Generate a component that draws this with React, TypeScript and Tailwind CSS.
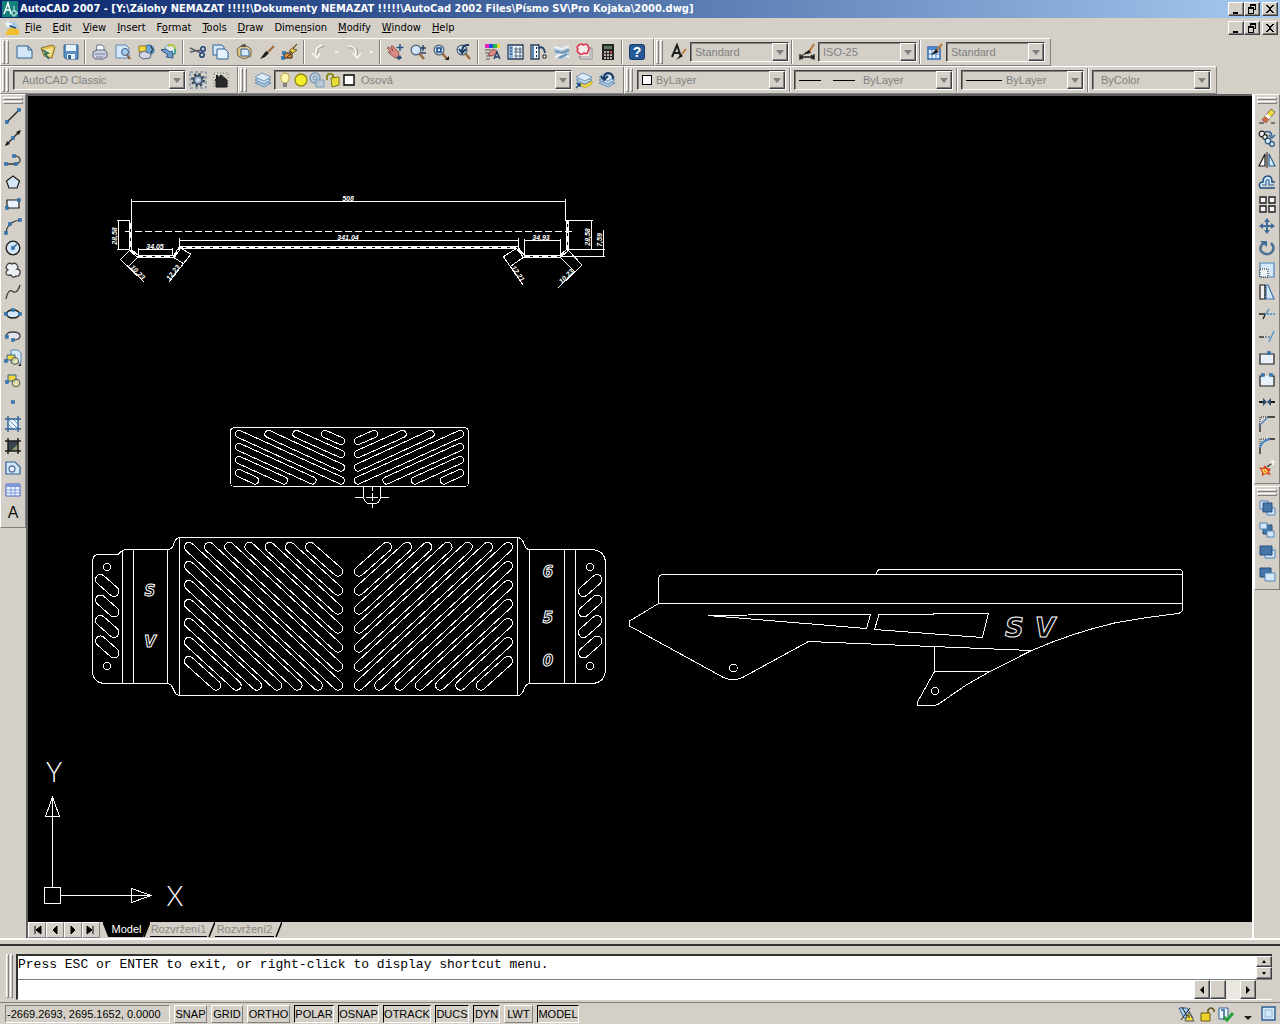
import type { ReactNode } from "react";
import clsx from "clsx";

const RAISED = "border border-t-white border-l-white border-r-[#808080] border-b-[#808080]";
const SUNKEN = "border border-t-[#808080] border-l-[#808080] border-r-white border-b-white";
const BEVEL =
  "border border-t-white border-l-white border-r-[#404040] border-b-[#404040] shadow-[inset_-1px_-1px_0_#808080] bg-[#d4d0c8]";

const B = "#2f6296";
const L = "#d3e7f8";
const K = "#1c1c1c";
const Y = "#f0d83c";

const magnifier = (
  <>
    <path d="M10 10 L15 16" stroke="#9a6a3c" strokeWidth="2.4" />
    <circle cx="7" cy="7" r="4.8" fill={L} stroke="#5a6a7c" strokeWidth="1.4" />
  </>
);
const brush = (
  <>
    <path d="M10 9 L16 3" stroke="#a86a38" strokeWidth="2.2" />
    <path d="M2 16 L8 8 L11 10 L7 14 Z" fill={K} />
  </>
);
const layers = (
  <g stroke="#5b83ad" strokeWidth=".8">
    <path d="M1 12 L8 9 L17 12 L10 16 Z" fill="#a9c6e2" />
    <path d="M1 9 L8 6 L17 9 L10 13 Z" fill="#c4daee" />
    <path d="M1 6 L8 2 L17 6 L10 10 Z" fill="#dcebf8" />
  </g>
);
const node = (x: number, y: number) => <rect x={x - 1.5} y={y - 1.5} width="3" height="3" fill="#2a7ab8" stroke={B} strokeWidth=".5" />;

const icons: Record<string, ReactNode> = {
  qnew: <path d="M1 3 H12 L16 7 V15 H1 Z M12 3 V7 H16" fill={L} stroke={B} />,
  open: (
    <>
      <path d="M2 5 L13 2 L16 4 L13 15 L5 13 Z" fill="#e3c65a" stroke="#8b742c" />
      <path d="M5 7 L14 5 L11 14 Z" fill="#f6e79c" />
      <path d="M3 7 L9 10 L6 11 L10 16" stroke="#2d6c68" strokeWidth="1.8" />
    </>
  ),
  save: (
    <>
      <path d="M2 2 H16 V16 H4 L2 14 Z" fill="#5b8fc4" stroke={B} />
      <path d="M4 2 H14 V8 H4 Z M5 11 H13 V16 H5 Z" fill="#e8f2fb" />
      <path d="M6 12 H9 V16 H6 Z" fill={B} />
    </>
  ),
  plot: (
    <>
      <path d="M5 9 L6 2 H11 L13 4 V9 Z" fill="#fff" stroke="#6b7290" />
      <path d="M2 9 L6 7 H14 L16 10 V14 L12 16 H4 L2 14 Z" fill="#c9cede" stroke="#5e6484" />
      <path d="M4 11 H14 M5 14 H12" stroke="#7b82a0" />
    </>
  ),
  preview: (
    <>
      <path d="M2 2 H12 L15 5 V15 H2 Z" fill={L} stroke="#5a86b2" />
      <circle cx="11" cy="9" r="3.5" fill="#a6cbea" stroke="#3e5f80" />
      <path d="M13 12 L16 16" stroke="#8b5a34" strokeWidth="2" />
    </>
  ),
  publish: (
    <>
      <circle cx="12" cy="7" r="5" fill="#6aa8d8" stroke={B} />
      <path d="M2 3 H9 V9 H2 Z" fill={Y} stroke="#8a7a20" />
      <path d="M3 10 L7 8 L14 11 L13 15 L6 16 L2 13 Z" fill="#d5d8e6" stroke="#5e6484" />
      <path d="M14 3 Q17 7 14 10" stroke={K} />
    </>
  ),
  dwf: (
    <>
      <circle cx="10" cy="7" r="5.500" fill="#dfe8ee" stroke="#58a3a0" />
      <path d="M8 3 Q14 0 15 6" stroke="#b7c83c" strokeWidth="2" />
      <path d="M15 6 Q16 11 12 12" stroke="#3aa08c" strokeWidth="2" />
      <path d="M1 7 L6 6 L10 9 L12 8 L13 15 L6 14 L8 12 Z" fill="#6f9ed0" stroke="#34587f" />
    </>
  ),
  cut: (
    <>
      <path d="M1 5 L12 10 M1 9 L12 7" stroke="#56606c" strokeWidth="1.4" />
      <circle cx="14" cy="6" r="2.2" stroke="#1e3f78" strokeWidth="1.5" />
      <circle cx="13" cy="12" r="2.2" stroke="#1e3f78" strokeWidth="1.5" />
    </>
  ),
  copy: (
    <>
      <path d="M1 2 H10 L12 4 V12 H1 Z" fill={L} stroke={B} />
      <path d="M5 6 H13 L16 9 V16 H5 Z" fill="#e6f2fc" stroke={B} />
    </>
  ),
  paste: (
    <>
      <path d="M2 6 L9 1 L16 6 V13 L9 16 L3 13 Z" fill="#dfc88a" stroke="#7c6538" />
      <path d="M6 6 H12 L14 8 V13 H6 Z" fill={L} stroke={B} />
      <path d="M6 3 L11 3" stroke="#555" strokeWidth="2" />
    </>
  ),
  match: brush,
  blockEdit: (
    <>
      <path d="M3 10 H11 V15 H3 Z" fill="#e88e38" stroke={K} />
      <path d="M16 1 L8 8 L11 9 L6 14 L16 7 L12 6 Z" fill={Y} stroke="#4d3510" strokeWidth=".8" />
      {node(3, 10)}
      {node(2, 15)}
    </>
  ),
  undo: (
    <>
      <path d="M14 3 Q6 3 7 12" stroke="#aaa69e" strokeWidth="2.5" />
      <path d="M13 2 Q5 3 6 12 M2 10 L7 15 L10 10" stroke="#f7f6f2" strokeWidth="1.6" />
    </>
  ),
  redo: (
    <>
      <path d="M4 4 Q13 4 12 12" stroke="#aaa69e" strokeWidth="2.5" />
      <path d="M3 3 Q12 3 11 12 M8 10 L12 15 L16 10" stroke="#f7f6f2" strokeWidth="1.6" />
    </>
  ),
  pan: (
    <>
      <path d="M1 5 L3 4 L7 8 L5 3 L7 3 L11 8 L13 9 L12 14 L9 15 L2 9 L5 9 Z" fill="#d98d84" stroke="#9a5752" />
      <path d="M10 15 L14 12 L16 15 L13 17 Z" fill="#2d5079" />
      <path d="M14 1 V8 M10.500 4.5 H17.500" stroke="#244f82" strokeWidth="1.4" />
    </>
  ),
  zoomRt: (
    <>
      {magnifier}
      <path d="M14 2 V8 M11.500 5 H17 M12 10 H17" stroke="#22406a" strokeWidth="1.4" />
    </>
  ),
  zoomWin: (
    <>
      {magnifier}
      <path d="M5 5 H9 V9 H5 Z" stroke="#124a8a" strokeWidth="1.6" />
      <path d="M17 13 V17 H13 Z" fill={K} />
    </>
  ),
  zoomPrev: (
    <>
      {magnifier}
      <path d="M14 2 Q7 1 7 9 M4 6 L7 10 L11 6" stroke="#1b3a5e" strokeWidth="2" />
    </>
  ),
  properties: (
    <>
      <path d="M1 1 H5 V5 H1 Z" fill="#e224c4" />
      <path d="M5 1 H9 V5 H5 Z" fill="#2749e0" />
      <path d="M9 1 H13 V5 H9 Z" fill="#22b84e" />
      <path d="M13 1 H16 V5 H13 Z" fill="#ecd22b" />
      <path d="M1 7 H7 M1 10 H6 M2 13 H7 M2 16 H6" stroke="#555" />
      <path d="M4 12 L9 6 L13 8 L9 13 Z" fill="#d98d84" stroke="#994f4a" />
      <path d="M10 16 L13 9 L16 16 M11 14 H15" stroke="#223a66" strokeWidth="1.4" />
    </>
  ),
  designCenter: (
    <>
      <path d="M1 2 H16 V16 H1 Z" fill="#eef5fb" stroke="#243a58" strokeWidth="1.300" />
      <path d="M2 3 H6 V15 H2 Z" fill="#86b2dc" />
      <path d="M3 5 H5 M3 8 H5 M3 11 H5" stroke="#243a58" />
      <path d="M8 5 H10 V7 H8 Z M12 5 H14 V7 H12 Z M8 8 H10 V10 H8 Z M12 8 H14 V10 H12 Z M8 12 H10 V14 H8 Z M12 12 H14 V14 H12 Z" stroke="#3a4c60" strokeWidth=".8" />
    </>
  ),
  toolPalettes: (
    <>
      <path d="M1 2 H9 V16 H1 Z" fill="#eef5fb" stroke="#243a58" strokeWidth="1.300" />
      <path d="M2 3 H4 V15 H2 Z" fill="#4e86bd" />
      <path d="M6 5 H7 M6 9 H7 M6 13 H7" stroke={K} strokeWidth="2" />
      <path d="M8 5 Q14 2 15 10" stroke="#24456c" strokeWidth="2" />
      <path d="M13 12 H16 V15 H13 Z" fill="#fff" stroke={K} />
    </>
  ),
  sheetSet: (
    <>
      <path d="M1 3 L8 5 L16 2 V15 L8 16 L1 9 Z" fill="#b3cbdd" />
      <path d="M1 4 L9 6 L16 3 M2 14 L8 11 L16 14" stroke="#eef5fa" strokeWidth="2" />
      <path d="M2 8 L9 10 L16 7 M6 15 L14 11" stroke="#6c93b4" strokeWidth="2" />
    </>
  ),
  markup: (
    <>
      <path d="M6 5 H16 V16 H4 V13" fill="#eee" stroke="#888" />
      <path d="M14 4 V14 H2" stroke="#999" />
      <path d="M3 2 Q6 0 7 2 Q11 0 12 3 Q14 6 12 8 Q12 12 8 10 Q5 13 3 10 Q0 8 2 6 Q0 4 3 2" fill="#f7ecee" stroke="#e0344f" strokeWidth="1.6" />
    </>
  ),
  calc: (
    <>
      <path d="M3 1 H15 V17 H3 Z" fill="#292424" />
      <path d="M5 3 H13 V6 H5 Z" fill="#5c7858" />
      <path d="M5 9 H13 M5 12 H13 M5 15 H13" stroke="#f0e4e2" strokeWidth="1.6" strokeDasharray="2 1" />
      <path d="M11 9 H13" stroke="#d33" strokeWidth="1.6" />
    </>
  ),
  help: (
    <>
      <rect x="1.500" y="1.500" width="15" height="15" rx="2" fill="#265a96" stroke="#173c68" />
      <text x="9" y="14" textAnchor="middle" fill="#fff" stroke="none" className="font-['Liberation_Sans'] text-[14px] font-bold">?</text>
    </>
  ),
  textStyle: (
    <>
      <path d="M2 14 L7 2 L11 14 M4 10 H10" stroke={K} strokeWidth="2" />
      <path d="M12 11 L16 6" stroke="#b87838" strokeWidth="2" />
      <path d="M6 17 L11 11 L13 13 Z" fill={K} />
    </>
  ),
  dimStyle: (
    <>
      <path d="M11 9 L16 1" stroke="#b87838" strokeWidth="2" />
      <path d="M4 12 L11 7 L13 10 Z" fill={K} />
      <path d="M2 11 V17 M16 11 V17 M2 14 H16 M5 12 L2 14 L5 16 M13 12 L16 14 L13 16" stroke={K} strokeWidth="1.300" />
    </>
  ),
  tableStyle: (
    <>
      <path d="M2 4 H14 V16 H2 Z" fill="#eaf3fc" stroke="#2c64b0" strokeWidth="1.5" />
      <path d="M2 4 H14 V7 H2 Z" fill="#4c86cc" />
      <path d="M2 11 H14 M6 7 V16 M10 7 V16" stroke="#4c86cc" />
      <path d="M11 7 L16 1" stroke="#b87838" strokeWidth="2" />
      <path d="M5 12 L10 6 L13 9 Z" fill={K} />
    </>
  ),
  gear: (
    <>
      <path d="M1 1 H17 V17 H1 Z" stroke="#56789d" strokeDasharray="3 2" />
      <circle cx="9" cy="9" r="5.800" stroke="#3f5368" strokeWidth="2.500" strokeDasharray="2.500 2" />
      <circle cx="9" cy="9" r="4.200" fill="#9db4cc" stroke="#33485e" strokeWidth="1.500" />
      <circle cx="9" cy="9" r="1.500" fill="#eee" />
    </>
  ),
  home: (
    <>
      <path d="M2 2 H16 V16 H2 Z" stroke="#777" strokeDasharray="1 2" />
      <path d="M3 9 L9 4 L15 9 V16 H4 V9 Z" fill="#292929" stroke={K} />
      <path d="M4 4 H6 V8 H4 Z" fill={K} />
    </>
  ),
  layers,
  layerCurrent: (
    <>
      {layers}
      <path d="M5 12 L10 14 L17 10 V13 L10 17 L5 14 Z" fill={Y} stroke="#a8921e" strokeWidth=".6" />
      <path d="M1 17 L5 13 M2 13 H5 V16" stroke="#174776" strokeWidth="1.300" />
    </>
  ),
  layerPrev: (
    <>
      {layers}
      <path d="M15 8 Q15 2 10 2 Q6 3 6 7 M3 5 L6 9 L10 5" stroke="#183a60" strokeWidth="2" />
    </>
  ),
  bulb: (
    <>
      <path d="M7 12 Q4 8 5 5 Q6 2 9 2 Q12 2 13 5 Q14 8 11 12 Z" fill="#fdf6ac" stroke="#b4a046" />
      <path d="M7 13 H11 M7 15 H11" stroke="#667" strokeWidth="1.600" />
    </>
  ),
  sun: <circle cx="9" cy="9" r="6" fill="#f4ee2a" stroke="#8b8a18" strokeWidth="1.300" />,
  vpFreeze: (
    <>
      <circle cx="7" cy="7" r="5" fill="#bcd0de" stroke="#7b9cb4" strokeWidth="1.500" />
      <circle cx="7" cy="7" r="2" stroke="#7b9cb4" />
      <path d="M8 9 H16 V16 H8 Z" fill="#b9c9d6" stroke="#7b9cb4" />
    </>
  ),
  lock: (
    <>
      <path d="M3 9 V5 Q5 1 9 4 V8" stroke="#8e8a1c" strokeWidth="2" />
      <path d="M7 7 L15 6 V14 L8 16 Z" fill="#e6dd3a" stroke="#7d7a14" />
    </>
  ),
  swatch: <path d="M4 4 H14 V14 H4 Z" fill="#fff" stroke="#000" strokeWidth="1.400" />,

  line: (
    <>
      <path d="M3 15 L15 3" stroke={K} strokeWidth="1.300" />
      {node(3, 15)}
      {node(15, 3)}
    </>
  ),
  xline: (
    <>
      <path d="M2 16 L16 2" stroke={K} strokeWidth="1.300" />
      <path d="M1 17 L3 12 L6 15 Z M17 1 L12 3 L15 6 Z" fill={K} />
      {node(9, 9)}
    </>
  ),
  pline: (
    <>
      <path d="M2 13 H12" stroke={K} strokeWidth="1.300" />
      <path d="M10 5 Q16 5 16 9 Q16 12 12 13" stroke="#555" strokeWidth="1.500" />
      {node(2, 13)}
      {node(12, 13)}
      {node(10, 5)}
    </>
  ),
  polygon: <path d="M9 3 L15.500 8 L13 15 H5 L2.500 8 Z" fill={L} stroke={K} strokeWidth="1.200" />,
  rect: (
    <>
      <path d="M3 5 H15 V13 H3 Z" fill="#eaf3fb" stroke={K} strokeWidth="1.200" />
      {node(3, 13)}
      {node(15, 5)}
    </>
  ),
  arc: (
    <>
      <path d="M2 16 Q3 5 16 3" stroke="#333" strokeWidth="1.200" />
      {node(2, 16)}
      {node(6, 7)}
      {node(16, 3)}
    </>
  ),
  circle: (
    <>
      <circle cx="9" cy="9" r="6.800" fill={L} stroke={K} strokeWidth="1.300" />
      <path d="M9 9 L13 5" stroke={B} strokeWidth="1.300" />
      {node(9, 9)}
    </>
  ),
  revcloud: (
    <path
      d="M4 9 Q1 7 3 4 Q5 1 8 3 Q11 1 13 4 Q15 7 13 8 Q17 9 16 12 Q15 16 12 15 Q9 18 7 14 Q2 15 2 12 Q2 10 4 9 Z"
      fill="#eef2f6"
      stroke="#444"
      strokeWidth="1.300"
    />
  ),
  spline: <path d="M2 16 Q4 6 8 8 Q13 12 16 2" stroke="#333" strokeWidth="1.200" />,
  ellipse: (
    <>
      <ellipse cx="9" cy="9" rx="6.500" ry="4" fill={L} stroke={K} strokeWidth="1.300" />
      {node(2, 9)}
      {node(16, 9)}
      {node(9, 5)}
    </>
  ),
  ellipseArc: (
    <>
      <path d="M2 10 Q2 5 9 5 Q16 5 16 9 Q16 13 9 13" fill="#e0e6ec" stroke="#444" strokeWidth="1.300" />
      {node(3, 10)}
      {node(9, 13)}
    </>
  ),
  insertBlock: (
    <>
      <path d="M7 1 H14 L17 4 V14 H7 Z" fill={L} stroke="#5a86b2" />
      <path d="M3 6 H11 V11 H3 Z" fill={Y} stroke={B} />
      <circle cx="11" cy="12" r="3.500" fill="#e9e69a" stroke="#555" fillOpacity=".7" />
      <path d="M17 14 V17 H14 Z" fill={K} />
      {node(2, 12)}
    </>
  ),
  makeBlock: (
    <>
      <path d="M4 4 H12 V10 H4 Z" fill={Y} stroke={B} />
      <circle cx="12" cy="12" r="3.800" fill="#e9e69a" stroke="#555" fillOpacity=".6" />
      {node(3, 11)}
    </>
  ),
  point: node(9, 9),
  hatch: (
    <>
      <path d="M4 4 H14 V14 H4 Z" fill="#edf5fc" />
      <path d="M5 5 L14 14 M9 4 L14 9 M4 9 L9 14 M12 4 L14 6 M4 12 L6 14" stroke="#3b77b4" strokeWidth=".8" />
      <path d="M1 4 H17 M1 14 H17 M4 1 V17 M14 1 V17" stroke={B} strokeWidth="1.400" />
    </>
  ),
  gradient: (
    <>
      <path d="M4 4 H14 V14 H4 Z" fill="#3c4650" />
      <path d="M14 7 V14 H7 Z" fill="#9a9a72" />
      <path d="M1 4 H17 M1 14 H17 M4 1 V17 M14 1 V17" stroke={K} strokeWidth="1.500" />
    </>
  ),
  region: (
    <>
      <path d="M2 3 H11 L16 8 V15 H2 Z" fill={L} stroke={B} strokeWidth="1.200" />
      <circle cx="8" cy="10" r="3" fill="#eef" stroke="#56789d" strokeWidth="1.300" />
    </>
  ),
  table: (
    <>
      <path d="M2 3 H16 V15 H2 Z" fill="#f2f7ff" stroke="#4467c0" />
      <path d="M2 3 H16 V6 H2 Z" fill="#7d97da" />
      <path d="M2 9 H16 M2 12 H16 M7 6 V15 M11 6 V15" stroke="#7d97da" />
    </>
  ),
  mtext: <text x="9" y="15" textAnchor="middle" fill="#111" stroke="none" className="font-['Liberation_Sans'] text-[16px]">A</text>,

  erase: (
    <>
      <path d="M1 16 H6 M13 16 H17" stroke={K} strokeWidth="1.200" />
      <path d="M4 13 L13 2 L17 5 L8 16 Z" fill={Y} stroke="#555" strokeWidth=".8" />
      <path d="M4 13 L7 9 L11 12 L8 16 Z" fill="#cf6a50" />
      <path d="M7 9 L9 7 L13 10 L11 12 Z" fill="#fff" />
    </>
  ),
  copyObj: (
    <>
      <circle cx="4" cy="5" r="2.800" fill="#eee" stroke={K} strokeWidth="1.200" />
      <circle cx="7" cy="8" r="2.300" fill="#eee" stroke={K} strokeWidth="1.200" />
      <circle cx="10" cy="12" r="2.800" fill={L} stroke="#264f7c" strokeWidth="1.200" />
      <circle cx="14" cy="15" r="2.300" fill={L} stroke="#264f7c" strokeWidth="1.200" />
      <path d="M7 3 Q13 1 14 7 M11 6 L14 9 L17 6" stroke={B} strokeWidth="1.500" />
    </>
  ),
  mirror: (
    <>
      <path d="M7 3 V15 H1 Z" fill="#fff" stroke={K} strokeWidth="1.200" />
      <path d="M11 3 V15 H17 Z" fill={L} stroke={B} strokeWidth="1.200" />
      <path d="M9 1 V17" stroke={K} />
    </>
  ),
  offset: (
    <>
      <path d="M2 15 Q0 9 5 9 Q5 3 10 3 Q14 3 14 9 H17 M2 15 H17" fill={L} stroke="#1f4f80" strokeWidth="1.500" />
      <path d="M4 12 H8 V8 Q10 5 11 8 V12 H16" stroke={B} strokeWidth="1.200" />
    </>
  ),
  array: <path d="M2 2 H8 V8 H2 Z M11 2 H17 V8 H11 Z M2 11 H8 V17 H2 Z M11 11 H17 V17 H11 Z" fill="#f4f4f4" stroke={K} strokeWidth="1.300" />,
  move: (
    <>
      <path d="M9 3 V15 M3 9 H15" stroke="#3e6b9a" strokeWidth="2" />
      <path d="M9 1 L12 5 H6 Z M9 17 L12 13 H6 Z M1 9 L5 6 V12 Z M17 9 L13 6 V12 Z" fill="#3e6b9a" />
    </>
  ),
  rotate: (
    <>
      <path d="M6 4 Q1 7 3 12 Q7 17 13 14 Q18 9 13 4" stroke="#4d7095" strokeWidth="2.500" />
      <path d="M2 2 H9 V8 Z" fill="#3e6b9a" />
    </>
  ),
  scale: (
    <>
      <path d="M2 2 H16 V16 H2 Z" fill={L} stroke="#4f84b8" strokeWidth="1.200" />
      <path d="M2 8 H10 V16 H2 Z" fill="#eef5fb" stroke={K} strokeDasharray="1 1" />
    </>
  ),
  stretch: (
    <>
      <path d="M2 2 H7 V16 H2 Z" fill="#eee" stroke={K} strokeWidth="1.200" />
      <path d="M8 2 H10 L16 16 H8 Z" fill={L} stroke="#3c76ae" strokeWidth="1.200" />
      <path d="M7 2 V16" stroke={K} strokeDasharray="1 1" />
    </>
  ),
  trim: (
    <>
      <path d="M1 9 H7 M5 14 L7 10" stroke={K} strokeWidth="1.300" />
      <path d="M7 10 L11 4" stroke="#3c86c6" strokeWidth="1.300" />
      <path d="M9 9 H17" stroke="#3c86c6" strokeWidth="1.300" strokeDasharray="2 1" />
    </>
  ),
  extend: (
    <>
      <path d="M1 10 H6" stroke={K} strokeWidth="1.300" />
      <path d="M7 10 H12" stroke={B} strokeDasharray="2 1" />
      <path d="M11 15 L16 4" stroke="#4f94d0" strokeWidth="1.300" />
    </>
  ),
  breakPoint: (
    <>
      <path d="M2 5 H16 V15 H2 Z" fill="#e8f1f9" stroke={K} strokeWidth="1.200" />
      {node(11, 4)}
    </>
  ),
  breakObj: (
    <>
      <path d="M4 5 H2 V15 H16 V5 H14" fill="#e8f1f9" stroke={K} strokeWidth="1.200" />
      {node(5, 4)}
      {node(13, 4)}
    </>
  ),
  join: (
    <>
      <path d="M1 9 H6 M12 9 H17" stroke={K} strokeWidth="1.800" />
      <path d="M5 5 L9 9 L5 13 Z M13 5 L9 9 L13 13 Z" fill="#2e4d6c" />
    </>
  ),
  chamfer: (
    <>
      <path d="M2 17 V9 M9 2 H17" stroke={K} strokeWidth="1.300" />
      <path d="M2 9 V2 H9" stroke={K} strokeDasharray="1 1" />
      <path d="M2 10 L10 2" stroke="#5389bf" strokeWidth="1.500" />
    </>
  ),
  fillet: (
    <>
      <path d="M2 17 V10 M10 2 H17" stroke={K} strokeWidth="1.300" />
      <path d="M2 9 V2 H9" stroke={K} strokeDasharray="1 1" />
      <path d="M2 11 Q3 4 12 2" stroke="#3f83c2" strokeWidth="1.800" />
    </>
  ),
  explode: (
    <>
      <path d="M1 8 L5 9 L7 6 L9 9 L13 10 L11 13 L13 16 L8 15 L4 17 L4 13 Z" fill="#d8452c" />
      <path d="M4 10 L8 10 L10 13 L6 15 Z" fill="#ffe24d" />
      <path d="M6 11 L8 12 L7 14 Z" fill="#d8452c" />
      <path d="M9 8 L14 4" stroke="#444" strokeWidth="1.500" />
      <path d="M12 4 L17 3 M14 1 L15 6" stroke="#f7f7f0" strokeWidth="1.500" />
    </>
  ),
  bringFront: (
    <>
      <path d="M2 2 H10 V10 H2 Z M9 9 H17 V16 H9 Z" fill={L} stroke="#4f84b8" />
      <path d="M5 4 H14 V13 H5 Z" fill="#4676aa" stroke="#264f7c" />
    </>
  ),
  sendBack: (
    <>
      <path d="M5 4 H14 V13 H5 Z" fill="#4676aa" stroke="#264f7c" />
      <path d="M2 2 H9 V8 H2 Z M9 10 H16 V16 H9 Z" fill={L} stroke="#4f84b8" />
    </>
  ),
  bringAbove: (
    <>
      <path d="M7 7 H17 V15 H7 Z" fill={L} stroke="#4f84b8" />
      <path d="M2 3 H14 V12 H2 Z" fill="#4676aa" stroke="#264f7c" />
    </>
  ),
  sendUnder: (
    <>
      <path d="M2 3 H13 V12 H2 Z" fill="#4676aa" stroke="#264f7c" />
      <path d="M7 8 H17 V16 H7 Z" fill={L} stroke="#4f84b8" />
    </>
  ),
};

function Icon({ name }: { name: string }) {
  return (
    <svg viewBox="0 0 18 18" className="h-[18px] w-[18px] shrink-0" fill="none" aria-hidden="true">
      {icons[name]}
    </svg>
  );
}

function ToolButton({ name, vertical }: { name: string; vertical?: boolean }) {
  return (
    <button type="button" aria-label={name} className={clsx("flex shrink-0 items-center justify-center", vertical ? "h-[22px] w-6" : "h-6 w-[23px]")}>
      <Icon name={name} />
    </button>
  );
}

function Grip() {
  return (
    <div className="mr-1 ml-px flex h-6 shrink-0 gap-px">
      <span className={clsx("w-[3px]", RAISED)} />
      <span className={clsx("w-[3px]", RAISED)} />
    </div>
  );
}

function Sep({ wide }: { wide?: boolean }) {
  return <span className={clsx("h-6 w-[2px] shrink-0 border-l border-[#808080] bg-white", wide ? "mx-[3px]" : "mx-[2px]")} />;
}

function Group({ children }: { children: ReactNode }) {
  return <div className={clsx("flex h-7 shrink-0 items-center pr-[5px]", RAISED)}>{children}</div>;
}

function Combo({ label, value, width, lead }: { label: string; value: string; width: string; lead?: ReactNode }) {
  return (
    <div
      className={clsx(
        "flex h-5 shrink-0 items-center border border-t-[#404040] border-l-[#404040] border-r-white border-b-white shadow-[inset_1px_1px_0_#808080]",
        width,
      )}
    >
      {lead}
      <select aria-label={label} className="min-w-0 flex-1 appearance-none bg-transparent pl-1 text-[11px] leading-4 text-[#808080] outline-none">
        <option>{value}</option>
      </select>
      <span className={clsx("pointer-events-none flex h-[18px] w-4 items-center justify-center", BEVEL)}>
        <svg viewBox="0 0 8 5" className="h-[5px] w-2" aria-hidden="true">
          <path d="M0 0 H8 L4 5 Z" fill="#808080" />
        </svg>
      </span>
    </div>
  );
}

function WindowButtons() {
  const shapes = [
    ["Minimize", "M3 9 H8 V11 H3 Z"],
    ["Restore", "M4 1 H10 V7 H8 V6 H9 V3 H5 V4 H4 Z M2 4 H8 V11 H2 Z M3 6 V10 H7 V6 Z"],
    ["Close", "M2 2 H4 L6 5 L8 2 H10 L7 6 L10 10 H8 L6 7 L4 10 H2 L5 6 Z"],
  ];
  return (
    <div className="flex shrink-0 pr-[2px]">
      {shapes.map(([label, d]) => (
        <button key={label} type="button" aria-label={label} className={clsx("flex h-[14px] w-4 items-center justify-center last:ml-[2px]", BEVEL)}>
          <svg viewBox="0 0 12 12" className="h-3 w-3" shapeRendering="crispEdges" aria-hidden="true">
            <path d={d} fillRule="evenodd" fill="#000" />
          </svg>
        </button>
      ))}
    </div>
  );
}

function AppMark() {
  return (
    <svg viewBox="0 0 16 16" className="h-4 w-4 shrink-0" aria-hidden="true">
      <rect width="16" height="16" fill="#14807c" />
      <path d="M2 13 L6 2 L9 13 M4 9 H8" stroke="#fff" strokeWidth="1.500" fill="none" />
      <path d="M12 5 V10 M8 12 H10 M12 14 V16 M14 12 H16 M10 10 H14 V14 H10 Z" stroke="#d6efee" fill="none" />
    </svg>
  );
}

// label, position of the underlined letter
const menus: [string, number][] = [
  ["File", 0],
  ["Edit", 0],
  ["View", 0],
  ["Insert", 0],
  ["Format", 1],
  ["Tools", 0],
  ["Draw", 0],
  ["Dimension", 4],
  ["Modify", 0],
  ["Window", 0],
  ["Help", 0],
];

const standardBar = [
  ["qnew", "open", "save"],
  ["plot", "preview", "publish", "dwf"],
  ["cut", "copy", "paste", "match", "blockEdit"],
  ["undo", ".", "redo", "."],
  ["pan", "zoomRt", "zoomWin", "zoomPrev"],
  ["properties", "designCenter", "toolPalettes", "sheetSet", "markup", "calc"],
  ["help"],
];

const drawBar = [
  "line", "xline", "pline", "polygon", "rect", "arc", "circle", "revcloud", "spline", "ellipse",
  "ellipseArc", "insertBlock", "makeBlock", "point", "hatch", "gradient", "region", "table", "mtext",
];
const modifyBar = [
  "erase", "copyObj", "mirror", "offset", "array", "move", "rotate", "scale", "stretch",
  "trim", "extend", "breakPoint", "breakObj", "join", "chamfer", "fillet", "explode",
];
const orderBar = ["bringFront", "sendBack", "bringAbove", "sendUnder"];

function SideBar({ items }: { items: string[] }) {
  return (
    <div className={clsx("flex w-[26px] flex-col items-center pt-[2px] pb-1", RAISED)}>
      <div className="mb-px flex w-5 flex-col gap-px">
        <span className={clsx("h-[3px]", RAISED)} />
        <span className={clsx("h-[3px]", RAISED)} />
      </div>
      {items.map((name) => (
        <ToolButton key={name} name={name} vertical />
      ))}
    </div>
  );
}

function Slot({ x1, y1, x2, y2, r }: { x1: number; y1: number; x2: number; y2: number; r: number }) {
  const len = Math.hypot(x2 - x1, y2 - y1);
  const nx = (-(y2 - y1) / len) * r;
  const ny = ((x2 - x1) / len) * r;
  return (
    <path d={`M${x1 + nx} ${y1 + ny} A${r} ${r} 0 0 1 ${x1 - nx} ${y1 - ny} L${x2 - nx} ${y2 - ny} A${r} ${r} 0 0 1 ${x2 + nx} ${y2 + ny} Z`} />
  );
}

const smallSlots = [
  [239, 434, 341, 480.5],
  [268.5, 434, 341, 467.5],
  [296.5, 434, 341, 454],
  [325, 434, 341, 441],
  [239, 447, 312.5, 480.5],
  [239, 460, 284, 480.5],
  [239, 473, 255, 480.5],
];

const bigSlots: number[][] = [];
for (let i = 0; i < 7; i++) {
  bigSlots.push([189, 547 + i * 19, 338 - i * 20.3, 685.5]);
  if (i > 0) bigSlots.push([189 + i * 20.2, 547, 338, 685.5 - i * 19]);
}

const dims: [string, number, number, number][] = [
  ["508", 348, 201, 0],
  ["341,04", 348, 240, 0],
  ["34,05", 155, 249, 0],
  ["34,93", 541, 240, 0],
  ["28,58", 117, 236, -90],
  ["28,58", 590, 237, -90],
  ["7,59", 602, 240, -90],
  ["10,23", 136, 274, 45],
  ["12,23", 175, 274, -52],
  ["12,21", 516, 275, 55],
  ["10,23", 568, 278, -45],
];

function Strip({ d }: { d: string }) {
  return (
    <>
      <path d={d} strokeWidth="3" />
      <path d={d} stroke="#000" strokeDasharray="3 6" />
    </>
  );
}

function Drawing() {
  return (
    <svg viewBox="28 96 1224 826" preserveAspectRatio="xMinYMin meet" className="block h-full w-full" fill="none" stroke="#fff" shapeRendering="crispEdges" role="img" aria-label="Model space">
      {/* section with dimensions */}
      <path d="M131.500 221 V199 M131.500 201.500 H565.500 M565.500 199 V221" />
      <path d="M125 231.500 H573" strokeDasharray="7 3" />
      <path d="M117 220.500 H130 M117 249.500 H130 M118.500 220 V250" />
      <path d="M138.500 248 V257 M172.500 248 V257 M138 249.500 H173" />
      <path d="M179.500 238 V248 M518.500 238 V248 M179 240.500 H519" />
      <path d="M524.500 239 V257 M560.500 239 V257 M524 240.500 H561" />
      <path d="M568 220.500 H593 M591.500 220 V249 M567 249.500 H605 M560 256.500 H605 M603.500 230 V257" />
      <path d="M130 250 L120 260 M138 257 L128 267 M120 259 L144 282 M180 248 L191 254 M173 257 L184 264 M191 254 L169 282" />
      <path d="M517 248 L503 257 M524 257 L511 266 M503 256 L523 285 M560 257 L575 272 M568 250 L582 265 M582 265 L558 288" />
      <Strip d="M130.500 220 V250 L138 256.500 H174 L180 247.500 H517 L524 256.500 H560 L567.500 250 V220" />
      <g fill="#fff" stroke="none" className="font-['Liberation_Sans'] text-[7px] font-bold italic">
        {dims.map(([label, x, y, a], i) => (
          <text key={i} x={x} y={y} textAnchor="middle" transform={`rotate(${a} ${x} ${y})`}>
            {label}
          </text>
        ))}
      </g>

      {/* small grille */}
      <rect x="230.500" y="427.500" width="238" height="59" rx="4" />
      {smallSlots.map(([x1, y1, x2, y2], i) => (
        <g key={i}>
          <Slot x1={x1} y1={y1} x2={x2} y2={y2} r={3.6} />
          <Slot x1={699 - x2} y1={y2} x2={699 - x1} y2={y1} r={3.6} />
        </g>
      ))}
      <path d="M363.500 487 V496 Q364 503.500 370 503.500 H375 Q380 503.500 380.500 496 V487 M355 497.500 H363 M366 497.500 H378 M381 497.500 H389 M372.500 487 V491 M372.500 493 V501 M372.500 503 V508" />

      {/* large grille */}
      <path d="M179.500 537.500 H517.500 V695.500 H179.500 Z" />
      <path d="M179.500 537.500 C172 538 176 549.500 167.500 549.500 H127 Q122 549.500 118 554.500 H98 Q92.500 554.500 92.500 563 V671 Q93 683.500 106 683.500 H167.500 C175 684 172 695 179.500 695.500" />
      <path d="M517.500 537.500 C526 538 522 549.500 529.500 549.500 H591 Q605.500 550 605.500 564 V669 Q605 683.500 591 683.500 H529.500 C522 684 526 695 517.500 695.500" />
      <path d="M122.500 550 V684 M133.500 550 V684 M167.500 550 V684 M529.500 550 V684 M564.500 550 V684 M575.500 550 V684" />
      {bigSlots.map(([x1, y1, x2, y2], i) => (
        <g key={i}>
          <Slot x1={x1} y1={y1} x2={x2} y2={y2} r={4.7} />
          <Slot x1={697 - x2} y1={y2} x2={697 - x1} y2={y1} r={4.7} />
        </g>
      ))}
      {[579.5, 600, 620.5, 641].map((y) => (
        <g key={y}>
          <Slot x1={100.5} y1={y} x2={114} y2={y + 12} r={5} />
          <Slot x1={583.5} y1={y + 12} x2={597} y2={y} r={5} />
        </g>
      ))}
      <circle cx="107" cy="567" r="3.500" />
      <circle cx="107" cy="666" r="3.500" />
      <circle cx="590" cy="567" r="3.500" />
      <circle cx="590" cy="666" r="3.500" />
      <g textAnchor="middle" className="font-['DejaVu_Sans'] text-[15px] font-bold italic">
        <text x="150" y="596">S</text>
        <text x="150" y="647">V</text>
        <text x="548" y="577">6</text>
        <text x="548" y="623">5</text>
        <text x="548" y="666">0</text>
      </g>

      {/* side view */}
      <path d="M658.500 603.500 V579 Q659 574.500 663 574.500 H1182.500 M658.500 603.500 H1182.500 M876.500 574.500 Q877 569.500 880 569.500 H1179 Q1182.500 570 1182.500 573 V609 Q1182.500 612.500 1178 613.500 Q1146 617 1114.500 623 Q1075 632 1031.500 650.500 L990 671.500 L965.500 685.500 L940 703 Q937 705.500 934 705.500 H918 L917 703 L934.500 671.500 V647" />
      <path d="M658.500 603.500 L629.500 621 V626 L723.500 677.500 Q733 682 743.500 677 L808.500 641.500 L1031.500 650.500 M934.500 671.500 H990" />
      <path d="M708 615.500 L789 614.500 H870.500 L866.500 628.500 Z M879 614.500 L988.500 613.500 L982.500 637.500 L874.500 629.500 Z" />
      <circle cx="733.500" cy="668" r="3.800" />
      <circle cx="935" cy="691" r="3.800" />
      <text x="1005 1035" y="637" className="font-['DejaVu_Sans'] text-[26px] font-bold italic">SV</text>

      {/* UCS icon */}
      <path d="M44.500 887.500 H60.500 V903.500 H44.500 Z M52.500 887 V798 M52.500 797 L45.500 816.500 H59.500 Z M60 895.500 H150 M151 895.500 L131.500 888.500 V902.500 Z" />
      <g fill="#fff" stroke="none" textAnchor="middle" className="font-['Lato'] text-[27px] font-light">
        <text x="54" y="782">Y</text>
        <text x="175" y="906">X</text>
      </g>
    </svg>
  );
}

function TabEdge({ left, right, slope }: { left: string; right: string; slope: "down" | "up" }) {
  return (
    <svg viewBox="0 0 8 15" className="h-[15px] w-2 shrink-0" aria-hidden="true">
      <rect width="8" height="15" fill={left} />
      <path d={slope === "down" ? "M0 0 H8 V15 H6 Z" : "M8 0 V15 H1 Z"} fill={right} />
      <path d={slope === "down" ? "M0 0 L6 15" : "M8 0 L2 15"} stroke="#000" strokeWidth="1.500" />
    </svg>
  );
}

function LayoutTabs() {
  const nav = [
    ["First", "M3 1 V9 M9 1 L4 5 L9 9 Z"],
    ["Previous", "M7 1 L3 5 L7 9 Z"],
    ["Next", "M3 1 L7 5 L3 9 Z"],
    ["Last", "M7 1 V9 M1 1 L6 5 L1 9 Z"],
  ];
  return (
    <div className="flex h-4 shrink-0 items-start">
      {nav.map(([label, d]) => (
        <button key={label} type="button" aria-label={label} className={clsx("flex h-4 w-[18px] items-center justify-center", RAISED)}>
          <svg viewBox="0 0 10 10" className="h-[10px] w-[10px]" aria-hidden="true">
            <path d={d} fill="#000" stroke="#000" />
          </svg>
        </button>
      ))}
      <span className="w-[3px]" />
      <TabEdge left="#d4d0c8" right="#000" slope="down" />
      <button type="button" className="h-[15px] w-[31px] bg-black text-[11px] leading-[15px] whitespace-nowrap text-white">Model</button>
      <TabEdge left="#000" right="#d4d0c8" slope="up" />
      <button type="button" className="h-[15px] w-[57px] border-b border-black text-[11px] leading-[15px] text-[#8c8880]">Rozvržení1</button>
      <TabEdge left="#d4d0c8" right="#d4d0c8" slope="up" />
      <button type="button" className="h-[15px] w-[59px] border-b border-black text-[11px] leading-[15px] text-[#8c8880]">Rozvržení2</button>
      <TabEdge left="#d4d0c8" right="#d4d0c8" slope="up" />
    </div>
  );
}

function ArrowButton({ label, d, size }: { label: string; d: string; size: string }) {
  return (
    <button type="button" aria-label={label} className={clsx("flex items-center justify-center", BEVEL, size)}>
      <svg viewBox="0 0 8 8" className="h-2 w-2" aria-hidden="true">
        <path d={d} fill="#000" />
      </svg>
    </button>
  );
}

function CommandWindow() {
  return (
    <div className="flex h-[58px] shrink-0 border-t-2 border-[#303030] pt-2 pr-2 pl-[6px]">
      <div className="mr-[3px] flex h-[44px] gap-px">
        <span className={clsx("w-[3px]", RAISED)} />
        <span className={clsx("w-[3px]", RAISED)} />
      </div>
      <div className="flex h-[46px] min-w-0 flex-1 flex-col border-t-2 border-l-2 border-[#303030] border-b border-b-white bg-white">
        <div className="flex h-6 shrink-0 border-b border-[#808080]">
          <p className="flex-1 truncate font-['Liberation_Mono',monospace] text-[13px] leading-[18px] text-black">
            Press ESC or ENTER to exit, or right-click to display shortcut menu.
          </p>
          <div className="flex flex-col">
            <ArrowButton label="Scroll up" d="M4 2 L6 5 H2 Z" size="h-[11px] w-4" />
            <ArrowButton label="Scroll down" d="M2 3 H6 L4 6 Z" size="h-[12px] w-4" />
          </div>
        </div>
        <div className="flex min-h-0 flex-1">
          <input aria-label="Command line" className="min-w-0 flex-1 bg-white font-['Liberation_Mono',monospace] text-[13px] outline-none" />
          <div className="flex w-[62px] justify-between bg-[#ebe8e2]">
            <div className="flex">
              <ArrowButton label="Scroll left" d="M6 0 V8 L2 4 Z" size="h-full w-4" />
              <span className={clsx("h-full w-4", BEVEL)} />
            </div>
            <ArrowButton label="Scroll right" d="M2 0 V8 L6 4 Z" size="h-full w-4" />
          </div>
          <span className="w-4 bg-[#d4d0c8]" />
        </div>
      </div>
    </div>
  );
}

const toggles: [string, boolean, string][] = [
  ["SNAP", false, "w-[33px]"],
  ["GRID", false, "w-8"],
  ["ORTHO", false, "w-[43px]"],
  ["POLAR", true, "w-10"],
  ["OSNAP", true, "w-[41px]"],
  ["OTRACK", true, "w-12"],
  ["DUCS", true, "w-[34px]"],
  ["DYN", true, "w-[27px]"],
  ["LWT", false, "w-[29px]"],
  ["MODEL", true, "w-[42px]"],
];

function StatusBar() {
  return (
    <div className="flex h-[22px] shrink-0 items-center gap-1 border-t border-[#808080] pt-px pr-1 pl-[5px]">
      <output className={clsx("h-[18px] w-[165px] truncate pl-px text-[11px] leading-4", SUNKEN)}>-2669.2693, 2695.1652, 0.0000</output>
      {toggles.map(([label, on, width]) => (
        <button
          key={label}
          type="button"
          aria-pressed={on}
          className={clsx(
            "h-[18px] text-center text-[11px] leading-4 whitespace-nowrap",
            width,
            on ? "border border-t-black border-l-black border-r-white border-b-white" : RAISED,
          )}
        >
          {label}
        </button>
      ))}
      <div className="ml-auto flex items-center">
        <svg viewBox="0 0 98 18" className="h-[18px] w-[98px]" fill="none" aria-hidden="true">
          <path d="M1 3 H9 L15 13 H6 Z" fill="#a9cfee" stroke={B} />
          <path d="M4 2 L11 15 M3 15 L12 3" stroke={K} />
          <path d="M11 7 L16 16 H7 Z" fill={Y} stroke="#555" />
          <path d="M11 10 V13" stroke={K} />
          <path d="M30 8 V5 Q33 1 36 5 V7" stroke="#5b531a" strokeWidth="1.500" />
          <path d="M23 8 H32 V16 H23 Z" fill="#ecd22b" stroke="#6b5c10" />
          <path d="M41 3 H50 V14 H41 Z" fill="#ecf4fb" stroke={B} />
          <path d="M43 5 H46 V15" stroke={B} strokeWidth="1.500" />
          <path d="M46 12 L49 15 L55 8" stroke="#26a23a" strokeWidth="3" />
          <path d="M66 11 H74 L70 15 Z" fill={K} />
          <path d="M84 2 H97 V15 H84 Z" fill={L} stroke={B} strokeWidth="1.500" />
          <path d="M87 5 H94 V12 H87 Z" stroke="#8fb8dc" />
        </svg>
      </div>
    </div>
  );
}

export default function App() {
  return (
    <div className="flex h-screen flex-col overflow-hidden bg-[#d4d0c8] font-['Liberation_Sans',sans-serif] text-[11px] text-black">
      <header className="flex h-[18px] shrink-0 items-center gap-[2px] bg-linear-to-r from-[#0a246a] to-[#a6caf0] pl-[2px]">
        <AppMark />
        <h1 className="flex-1 truncate font-['DejaVu_Sans_Condensed','DejaVu_Sans',sans-serif] text-[11px] leading-[18px] font-bold text-white">
          AutoCAD 2007 - [Y:\Zálohy NEMAZAT !!!!!\Dokumenty NEMAZAT !!!!!\AutoCad 2002 Files\Písmo SV\Pro Kojaka\2000.dwg]
        </h1>
        <WindowButtons />
      </header>

      <nav className="flex h-5 shrink-0 items-center pl-1">
        <svg viewBox="0 0 16 16" className="mr-[5px] h-4 w-4 shrink-0" aria-hidden="true">
          <path d="M3 2 H11 L14 5 V14 H3 Z" fill="#a9c9e6" />
          <path d="M1 15 L4 9 Q10 6 15 10 V15 Z" fill="#f0c030" />
          <path d="M4 1 V8 M1 4 H8" stroke="#f8fbff" strokeWidth="1.500" />
          <path d="M6 6 L12 8" stroke="#244f82" strokeWidth="1.500" />
        </svg>
        <div className="flex flex-1 gap-[11px]">
          {menus.map(([label, at]) => (
            <button key={label} type="button" className="font-['DejaVu_Sans_Condensed','DejaVu_Sans',sans-serif] text-[11px] leading-4">
              {label.slice(0, at)}
              <u>{label[at]}</u>
              {label.slice(at + 1)}
            </button>
          ))}
        </div>
        <WindowButtons />
      </nav>

      <div className="flex shrink-0">
        <Group>
          <Grip />
          {standardBar.map((part, i) => (
            <div key={i} className="flex items-center">
              {i > 0 && <Sep />}
              {part.map((name, j) =>
                name === "." ? (
                  <span key={j} className="flex w-3 justify-center">
                    <span className="h-[2px] w-[3px] bg-[#f4f2ee]" />
                  </span>
                ) : (
                  <ToolButton key={j} name={name} />
                ),
              )}
            </div>
          ))}
        </Group>
        <Group>
          <Grip />
          <ToolButton name="textStyle" />
          <Combo label="Text style" value="Standard" width="w-[99px]" />
          <Sep />
          <ToolButton name="dimStyle" />
          <Combo label="Dimension style" value="ISO-25" width="w-[99px]" />
          <Sep />
          <ToolButton name="tableStyle" />
          <Combo label="Table style" value="Standard" width="w-[99px]" />
        </Group>
      </div>

      <div className="flex shrink-0">
        <Group>
          <Grip />
          <Combo label="Workspace" value="AutoCAD Classic" width="w-[173px]" lead={<span className="w-1" />} />
          <ToolButton name="gear" />
          <ToolButton name="home" />
        </Group>
        <Group>
          <Grip />
          <ToolButton name="layers" />
          <Combo
            label="Layer"
            value="Osová"
            width="w-[298px]"
            lead={
              <span className="flex pl-[2px]">
                {["bulb", "sun", "vpFreeze", "lock", "swatch"].map((name) => (
                  <span key={name} className="flex w-[16px] justify-center">
                    <Icon name={name} />
                  </span>
                ))}
              </span>
            }
          />
          <ToolButton name="layerCurrent" />
          <ToolButton name="layerPrev" />
        </Group>
        <Group>
          <Grip />
          <Combo label="Color" value="ByLayer" width="w-[149px]" lead={<span className="ml-1 h-[10px] w-[10px] border border-black bg-white" />} />
          <Sep wide />
          <Combo
            label="Linetype"
            value="ByLayer"
            width="w-[159px]"
            lead={
              <span className="flex gap-3 pr-1 pl-1">
                <span className="h-px w-[22px] bg-black" />
                <span className="h-px w-[22px] bg-black" />
              </span>
            }
          />
          <Sep wide />
          <Combo label="Lineweight" value="ByLayer" width="w-[123px]" lead={<span className="ml-1 h-px w-9 bg-black" />} />
          <Sep wide />
          <Combo label="Plot style" value="ByColor" width="w-[119px]" lead={<span className="w-1" />} />
        </Group>
      </div>

      <div className="flex min-h-0 flex-1">
        <aside className="shrink-0">
          <SideBar items={drawBar} />
        </aside>
        <main className="flex min-w-0 flex-1 flex-col border-t-2 border-l-2 border-[#606060]">
          <div className="min-h-0 flex-1 bg-black">
            <Drawing />
          </div>
          <LayoutTabs />
        </main>
        <aside className="flex shrink-0 flex-col gap-[2px] border-l-2 border-white">
          <SideBar items={modifyBar} />
          <SideBar items={orderBar} />
        </aside>
      </div>
      <div className="h-[6px] shrink-0 border-t-2 border-white" />
      <CommandWindow />
      <StatusBar />
    </div>
  );
}
